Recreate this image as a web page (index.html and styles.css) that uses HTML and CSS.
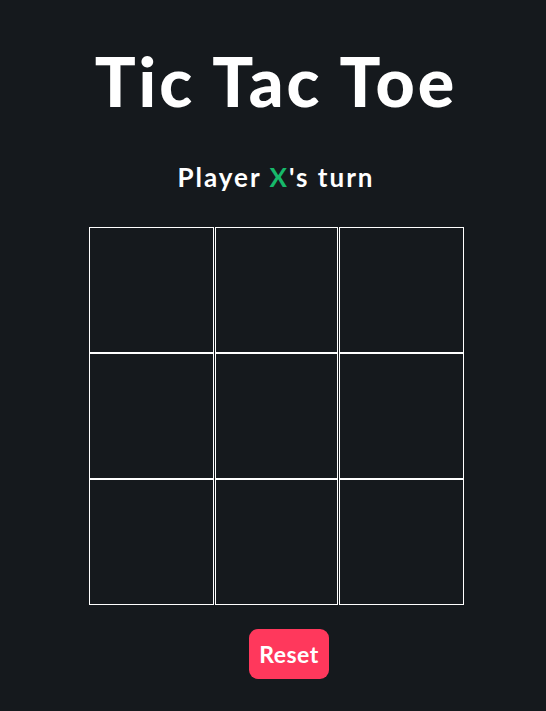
FILE: index.html
```html
<!DOCTYPE html>
<html lang="en">
<head>
    <meta charset="UTF-8">
    <meta name="viewport" content="width=device-width, initial-scale=1.0">
    <title>Tic Tac Toe</title>
    <link rel="stylesheet" href="styles.css">
</head>
<body>
    <div class="game">
        <h1 class="title">Tic Tac Toe</h1>
        <p class="status">Player <span class="player-x">X</span>'s turn</p>

        <div class="board">
            <div class="cell"></div>
            <div class="cell"></div>
            <div class="cell"></div>
            <div class="cell"></div>
            <div class="cell"></div>
            <div class="cell"></div>
            <div class="cell"></div>
            <div class="cell"></div>
            <div class="cell"></div>
        </div>

        <button class="reset-btn">Reset</button>
    </div>
</body>
</html>
```

FILE: styles.css
```css
body {
    margin: 0;
    padding: 0 0 0 6px;
    background-color: #15191d;
    color: #ffffff;
    font-family: Lato, "Open Sans", sans-serif;
}
.game {
    display: flex;
    flex-direction: column;
    align-items: center;
}
.title {
    margin: 40px 0 0 0;
    font-size: 68px;
    font-weight: 900;
    line-height: 82px;
    letter-spacing: 3px;
}
.status {
    margin: 39px 0 0 0;
    font-size: 26px;
    font-weight: 700;
    line-height: 32px;
    letter-spacing: 2px;
}
.player-x {
    color: #17b86a;
}
.board {
    display: grid;
    grid-template-columns: 125px 123px 125px;
    grid-template-rows: repeat(3, 126px);
    column-gap: 1px;
    margin-top: 34px;
}
.cell {
    border: 1px solid #ffffff;
    cursor: pointer;
}
.reset-btn {
    margin: 24px 0 0 26px;
    width: 80px;
    height: 50px;
    border: none;
    border-radius: 9px;
    background-color: #ff385c;
    color: #ffffff;
    font-family: Lato, "Open Sans", sans-serif;
    font-size: 23px;
    font-weight: 700;
    letter-spacing: 0.5px;
    cursor: pointer;
}
```
